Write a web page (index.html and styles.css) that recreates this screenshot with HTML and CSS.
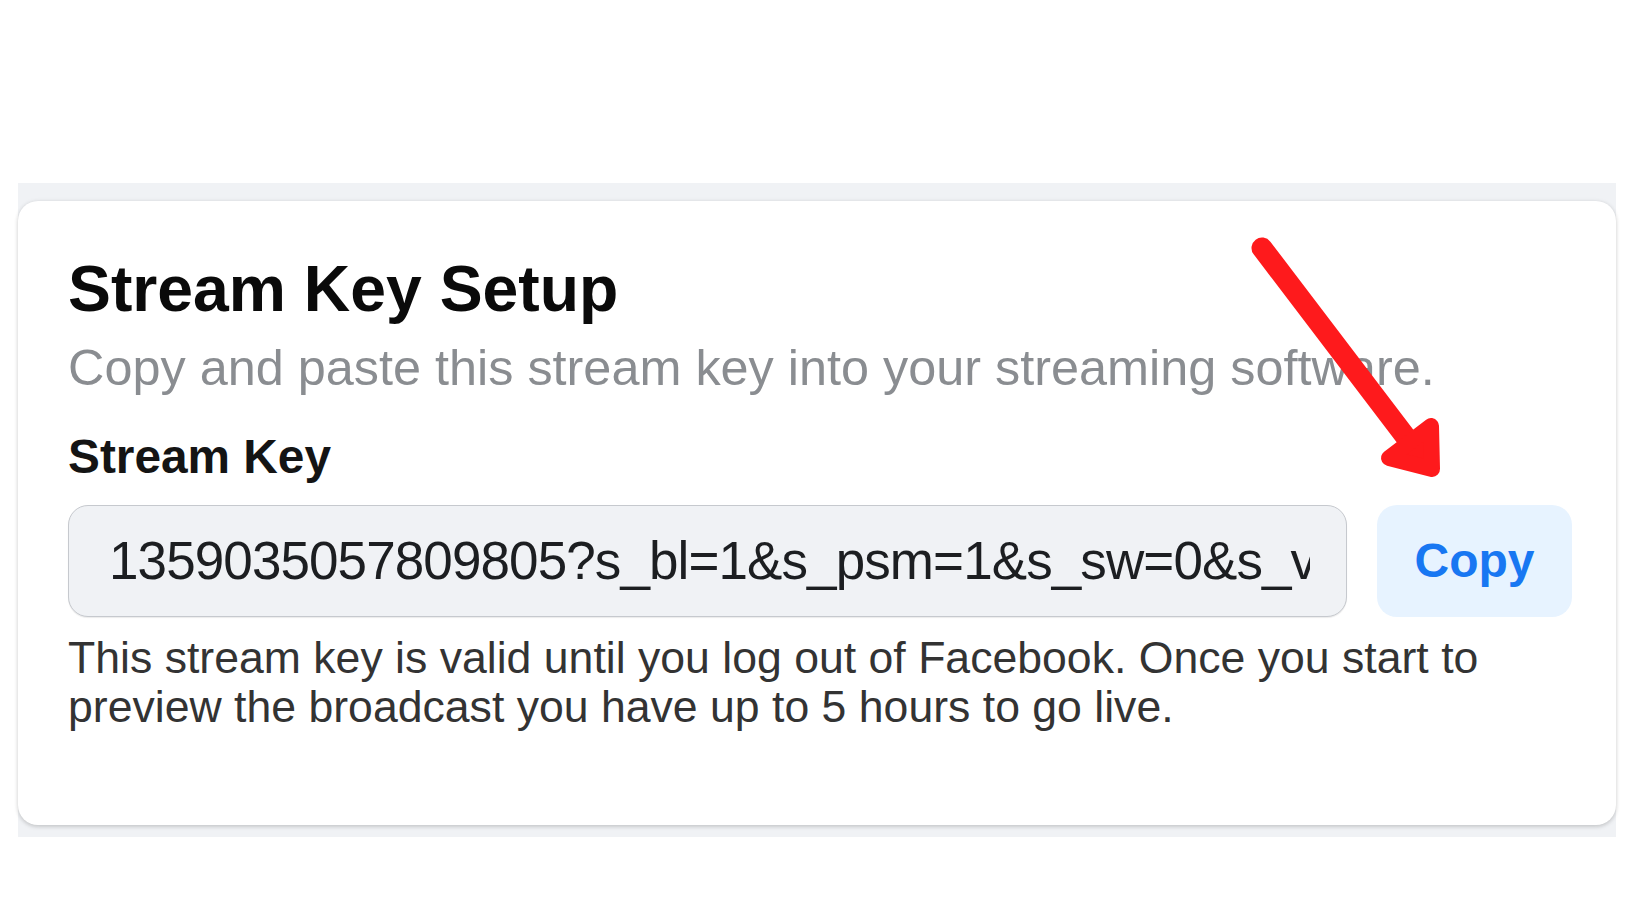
FILE: index.html
```html
<!DOCTYPE html>
<html lang="en">
<head>
<meta charset="utf-8">
<title>Stream Key Setup</title>
<link rel="stylesheet" href="styles.css">
</head>
<body>
<div class="page">
  <section class="panel">
    <div class="card">
      <h1 class="title">Stream Key Setup</h1>
      <p class="subtitle">Copy and paste this stream key into your streaming software.</p>
      <h2 class="label">Stream Key</h2>
      <div class="key-row">
        <input class="key-input" type="text" readonly value="1359035057809805?s_bl=1&amp;s_psm=1&amp;s_sw=0&amp;s_vt=api-s&amp;a=AbzK9lM2xQ7pT1vR">
        <button class="copy-btn" type="button">Copy</button>
      </div>
      <p class="help">This stream key is valid until you log out of Facebook. Once you start to preview the broadcast you have up to 5 hours to go live.</p>
    </div>
  </section>
  <svg class="arrow" width="1640" height="924" viewBox="0 0 1640 924" aria-hidden="true">
    <line x1="1262" y1="248" x2="1405" y2="436" stroke="#fe1a1c" stroke-width="21" stroke-linecap="round"/>
    <polygon points="1431,426 1432,469 1389,458" fill="#fe1a1c" stroke="#fe1a1c" stroke-width="16" stroke-linejoin="round"/>
  </svg>
</div>
</body>
</html>
```
FILE: styles.css
```css
* { box-sizing: border-box; }

html, body {
  margin: 0;
  padding: 0;
  background: #ffffff;
}

body {
  font-family: "Liberation Sans", Arial, Helvetica, sans-serif;
  color: #1c1e21;
}

.page {
  position: relative;
  width: 1640px;
  height: 924px;
  padding-top: 183px;
  overflow: hidden;
}

.panel {
  margin-left: 18px;
  width: 1598px;
  background: #f0f2f5;
  padding: 18px 0 12px;
}

.card {
  background: #ffffff;
  border-radius: 20px;
  padding: 50px 44px 94px 50px;
  box-shadow: 0 0 4px rgba(0, 0, 0, 0.08), 0 2px 4px rgba(0, 0, 0, 0.14);
}

.title {
  margin: 0;
  font-size: 64.3px;
  line-height: 76.8px;
  font-weight: bold;
  color: #0a0a0a;
}

.subtitle {
  margin: 10px 0 0;
  font-size: 50.4px;
  line-height: 60px;
  color: #8a8d91;
}

.label {
  margin: 31px 0 0;
  font-size: 47.8px;
  line-height: 56px;
  font-weight: bold;
  color: #141414;
}

.key-row {
  margin-top: 20px;
  display: flex;
  gap: 30px;
  height: 112px;
}

.key-input {
  flex: 1;
  min-width: 0;
  height: 112px;
  margin: 0;
  padding: 0 36px 0 40px;
  border: 1px solid #c6c9ce;
  border-radius: 20px;
  background: #f0f2f5;
  box-shadow: 0 1px 1px rgba(0, 0, 0, 0.08);
  font-family: "Liberation Sans", Arial, Helvetica, sans-serif;
  font-size: 53px;
  letter-spacing: -0.9px;
  color: #1c1e21;
  outline: none;
}

.copy-btn {
  width: 195px;
  height: 112px;
  margin: 0;
  padding: 0;
  border: none;
  border-radius: 20px;
  background: #e7f3ff;
  color: #1877f2;
  font-family: "Liberation Sans", Arial, Helvetica, sans-serif;
  font-size: 48px;
  font-weight: bold;
}

.help {
  margin: 16px 0 0;
  font-size: 44.6px;
  line-height: 49px;
  color: #333333;
}

.arrow {
  position: absolute;
  left: 0;
  top: 0;
  pointer-events: none;
}
```
